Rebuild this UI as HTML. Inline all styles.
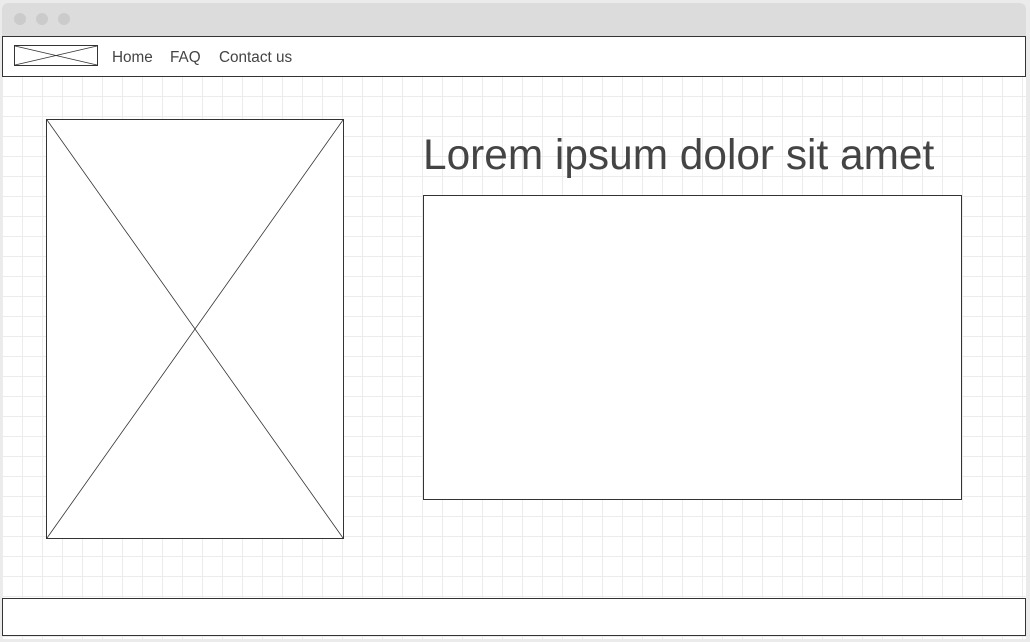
<!DOCTYPE html>
<html><head><style>
body{margin:0;width:1030px;height:642px;background:#ebebeb;position:relative;overflow:hidden;font-family:"Liberation Sans",sans-serif;}
.win{position:absolute;left:2px;top:3px;width:1024px;height:636px;background:#fff;border-radius:6px 6px 0 0;overflow:hidden;}
.top{position:absolute;left:0;top:0;width:1024px;height:33px;background:#dcdcdc;}
.dot{position:absolute;top:10px;width:12px;height:12px;border-radius:50%;background:#cbcbcb;}
.grid{position:absolute;left:0;top:74px;width:1024px;height:562px;
background-image:linear-gradient(#ececec 1px,transparent 1px),linear-gradient(90deg,#ececec 1px,transparent 1px);
background-size:20px 20px;background-position:0 19px,20px 0;}
.box{position:absolute;border:1px solid #333;background:#fff;box-sizing:border-box;}
.nav{position:absolute;top:48px;font-size:15.3px;color:#444;}
</style></head><body>
<div class="win">
<div class="top"><div class="dot" style="left:12px"></div><div class="dot" style="left:34px"></div><div class="dot" style="left:56px"></div></div>
<div class="grid"></div>
<div class="box" style="left:0;top:33px;width:1024px;height:41px;"></div>
<div class="box" style="left:0;top:595px;width:1024px;height:38px;"></div>
</div>
<svg style="position:absolute;left:14px;top:45px" width="85" height="22"><rect x="0.5" y="0.5" width="83" height="20" fill="#fff" stroke="#333"/><line x1="1" y1="1" x2="83" y2="20" stroke="#333" stroke-width=".8"/><line x1="83" y1="1" x2="1" y2="20" stroke="#333" stroke-width=".8"/></svg>
<div class="nav" style="left:112px;top:49px">Home</div>
<div class="nav" style="left:170px;top:49px">FAQ</div>
<div class="nav" style="left:219px;top:49px">Contact us</div>
<svg style="position:absolute;left:46px;top:119px" width="299" height="421"><rect x="0.5" y="0.5" width="297" height="419" fill="#fff" stroke="#333"/><line x1="1" y1="1" x2="297" y2="419" stroke="#333" stroke-width=".8"/><line x1="297" y1="1" x2="1" y2="419" stroke="#333" stroke-width=".8"/></svg>
<div style="position:absolute;left:423px;top:131px;font-size:42.4px;color:#444;white-space:nowrap">Lorem ipsum dolor sit amet</div>
<div class="box" style="left:423px;top:195px;width:539px;height:305px;"></div>
</body></html>
